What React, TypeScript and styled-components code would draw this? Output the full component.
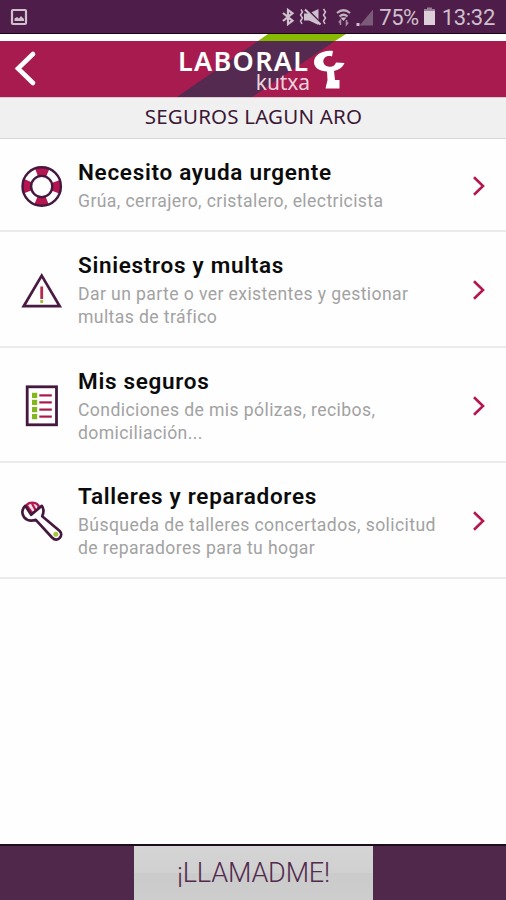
import React from "react";
import styled, { createGlobalStyle } from "styled-components";

const plum = "#50284c";
const crimson = "#a81b4f";

const GlobalStyle = createGlobalStyle`
  * { box-sizing: border-box; }
  body { margin: 0; background: #fff; }
`;

const Screen = styled.div`
  width: 506px;
  height: 900px;
  display: flex;
  flex-direction: column;
  background: #fefefe;
  font-family: Roboto, "Liberation Sans", sans-serif;
  overflow: hidden;
`;

const StatusBar = styled.div`
  height: 34px;
  flex: none;
  display: flex;
  align-items: center;
  padding: 0 11px 0 10px;
  background: #4e1d49;
  border-bottom: 1px solid #1b0618;
  color: #cfc0cd;
`;

const StatusRight = styled.div`
  margin-left: auto;
  display: flex;
  align-items: center;
`;

const StatusText = styled.span<{ $spacing: number }>`
  font-size: 22px;
  line-height: 33px;
  letter-spacing: ${(p) => p.$spacing}px;
  padding-top: 2px;
`;

const Header = styled.header`
  position: relative;
  height: 63px;
  flex: none;
  padding-top: 7px;
  background: linear-gradient(#fff 7px, ${crimson} 7px);
`;

const Ribbon = styled.svg`
  position: absolute;
  left: 0;
  top: 0;
`;

const HeaderContent = styled.div`
  position: relative;
  height: 56px;
  display: flex;
  align-items: flex-start;
`;

const BackButton = styled.button`
  border: 0;
  background: none;
  padding: 0 0 0 12px;
  width: 178px;
  height: 54px;
  display: flex;
  align-items: center;
`;

const Wordmark = styled.div`
  width: 132px;
  display: flex;
  flex-direction: column;
  align-items: flex-end;
  padding-top: 8px;
  color: #fff;
  font-family: "Noto Sans", "Open Sans", sans-serif;
`;

const BrandMain = styled.span`
  width: 132px;
  font-size: 27px;
  font-weight: 600;
  line-height: 23px;
  letter-spacing: 1.3px;
  white-space: nowrap;
`;

const BrandSub = styled.span`
  font-size: 21px;
  line-height: 20px;
  color: #ead3df;
  letter-spacing: -0.1px;
`;

const BrandIcon = styled.svg`
  margin: 8px 0 0 3px;
`;

const SectionTitle = styled.h1`
  margin: 0;
  height: 42px;
  flex: none;
  background: #f0f0f0;
  border-top: 1px solid #d9c9d1;
  border-bottom: 1px solid #d8d8d8;
  text-align: center;
  font-family: "Noto Sans", "Open Sans", sans-serif;
  font-weight: 400;
  font-size: 20.5px;
  line-height: 37px;
  letter-spacing: 0.2px;
  color: #3b1836;
  padding-left: 1px;
`;

const List = styled.ul`
  list-style: none;
  margin: 0;
  padding: 0;
  flex: 1;
`;

const Row = styled.li<{ $height: number }>`
  height: ${(p) => p.$height}px;
  display: flex;
  border-bottom: 2px solid #ebebeb;
`;

const IconCell = styled.div`
  width: 78px;
  padding-left: 20px;
  display: flex;
  align-items: center;
  padding-top: 4px;
`;

const TextCell = styled.div`
  flex: 1;
  padding-top: 19px;
  white-space: nowrap;
`;

const RowTitle = styled.div`
  font-size: 22.5px;
  font-weight: 600;
  line-height: 28px;
  letter-spacing: 0.7px;
  color: #0b0b0b;
  margin-bottom: 4px;
`;

const RowLine = styled.div`
  font-size: 17.6px;
  line-height: 22.5px;
  letter-spacing: 0.4px;
  color: #a2a2a2;
`;

const ChevronCell = styled.div`
  width: 34px;
  display: flex;
  align-items: center;
  padding-top: 2px;
`;

const Footer = styled.footer`
  height: 56px;
  flex: none;
  display: flex;
  justify-content: center;
  background: ${plum};
  border-top: 2px solid #1d0e1c;
`;

const CallButton = styled.button`
  width: 239px;
  margin-left: 1px;
  height: 54px;
  border: 0;
  padding: 0;
  background: linear-gradient(#d5d5d5 0%, #d0d0d0 50%, #cbcbcb 51%, #cdcdcd 100%);
  color: #512a4d;
  font-family: Roboto, sans-serif;
  font-weight: 300;
  font-size: 27px;
  letter-spacing: -0.15px;
`;

const Lifebuoy = () => (
  <svg width="44" height="44" viewBox="0 0 44 44">
    <circle cx="21.7" cy="21.5" r="15" fill="none" stroke="#fff" strokeWidth="9" />
    <circle cx="21.7" cy="21.5" r="15" fill="none" stroke="#b5164f" strokeWidth="9" strokeDasharray="11.4 12.16" strokeDashoffset="5.7" />
    <circle cx="21.7" cy="21.5" r="19.2" fill="none" stroke="#45183f" strokeWidth="2.4" />
    <circle cx="21.7" cy="21.5" r="10.6" fill="none" stroke="#45183f" strokeWidth="2.4" />
  </svg>
);

const Warning = () => (
  <svg width="44" height="44" viewBox="0 0 44 44">
    <path d="M21.7 6.6 L39.7 37.2 H3.7 Z" fill="none" stroke="#491a43" strokeWidth="2.7" />
    <path d="M21.7 17.5 V30" stroke="#b5294b" strokeWidth="2.8" />
    <path d="M21.7 31 V34" stroke="#9bbb32" strokeWidth="2.8" />
  </svg>
);

const Policy = () => (
  <svg width="44" height="44" viewBox="0 0 44 44">
    <rect x="7.2" y="1.8" width="29.3" height="38" fill="none" stroke="#45183f" strokeWidth="2.8" />
    {[7.8, 14.8, 22, 29].map((y) => (
      <g key={y}>
        <rect x="12" y={y} width="5.2" height="5.2" fill="#82b81c" />
        <path d={`M19.3 ${y + 2.6} H31.8`} stroke="#ad184b" strokeWidth="2.2" />
      </g>
    ))}
  </svg>
);

const Wrench = () => (
  <svg width="44" height="44" viewBox="0 0 44 44" strokeLinejoin="round">
    <path d="M6.5 5.2 C9 2 15 1.5 18.5 5.5 V9 L12.5 13.5 Z" fill="#f6dfe7" stroke="#b5164f" strokeWidth="2.4" />
    <path d="M12 3.5 L15.5 10" stroke="#b5164f" strokeWidth="2.2" />
    <path
      d="M5.3 5.8 C1.8 9 1.4 14 4.2 17.3 C7 20.5 11.5 21.2 15.8 19.8 L32 37.5 C34.5 40 37.5 40 39.6 38 C41.8 35.8 41.6 33 39.7 31 L22.2 16.2 C24 12.3 23.7 8.5 21.8 5.8 L11.2 14.8 Z"
      fill="#fff"
      stroke="#45183f"
      strokeWidth="2.7"
    />
    <circle cx="35.8" cy="34.2" r="2.5" fill="#a0c840" />
  </svg>
);

const Chevron = () => (
  <svg width="14" height="22" viewBox="0 0 14 22">
    <path d="M2 2.2 L11 11 L2 19.8" fill="none" stroke="#b3174f" strokeWidth="2.6" />
  </svg>
);

const StatusIcons = () => (
  <svg width="98" height="24" viewBox="0 0 98 24">
    <path d="M2 8 L11.5 15.8 L7 19 V5 L11.5 8.2 L2 16" fill="none" stroke="#cfc0cd" strokeWidth="2.2" />
    <path d="M23 8.5 H28 L37.5 4 V20 L28 15.5 H23 Z" fill="#cfc0cd" />
    <path d="M26 4 L40 18.5" stroke="#4e1d49" strokeWidth="2" />
    <path d="M24 4.5 L39.5 19.5" stroke="#cfc0cd" strokeWidth="2.2" />
    <path d="M20 4.5 L21.5 7 L19.5 10 L21.5 13 L19.5 16 L21 19 M42.5 4 L44.5 7 L42.5 10 L44.5 13 L42.5 16 L44 19" fill="none" stroke="#cfc0cd" strokeWidth="1.5" />
    <path d="M56 8 Q62.5 2.5 69 8 M58.5 11.5 Q62.5 8 66.5 11.5" fill="none" stroke="#c3b0c1" strokeWidth="2.2" />
    <path d="M59.5 12.5 H65.5 L62.5 16 Z" fill="#cfc0cd" />
    <path d="M59.5 20 V15.5 L57.8 17.5 M65.5 15 V19.5 L67.2 17.5" fill="none" stroke="#a78ea5" strokeWidth="1.6" />
    <path d="M92 4.5 V20.5 H78.5 Z" fill="#7c5a79" />
    <rect x="75.5" y="18" width="3" height="3" fill="#cfc0cd" />
  </svg>
);

const items: { icon: React.ReactNode; title: string; height: number; lines: string[] }[] = [
  { icon: <Lifebuoy />, title: "Necesito ayuda urgente", height: 93, lines: ["Grúa, cerrajero, cristalero, electricista"] },
  { icon: <Warning />, title: "Siniestros y multas", height: 116, lines: ["Dar un parte o ver existentes y gestionar", "multas de tráfico"] },
  { icon: <Policy />, title: "Mis seguros", height: 115, lines: ["Condiciones de mis pólizas, recibos,", "domiciliación..."] },
  { icon: <Wrench />, title: "Talleres y reparadores", height: 116, lines: ["Búsqueda de talleres concertados, solicitud", "de reparadores para tu hogar"] },
];

export default function App() {
  return (
    <Screen>
      <GlobalStyle />
      <StatusBar>
        <svg width="18" height="18" viewBox="0 0 18 18">
          <rect x="2" y="2" width="14" height="14" rx="1" fill="none" stroke="#cfc0cd" strokeWidth="2.2" />
          <path d="M4.5 13 V10.5 L7 9 L9 10.5 L11 8 L14 11 V13 Z" fill="#cfc0cd" />
        </svg>
        <StatusRight>
          <StatusIcons />
          <StatusText $spacing={-0.5}>75%</StatusText>
          <svg width="23" height="22" viewBox="0 0 23 22">
            <path d="M5 5 V3 H8 V1.5 H13 V3 H16 V5 Z" fill="#9a7d97" />
            <rect x="5" y="5" width="11" height="14" fill="#dccfda" />
          </svg>
          <StatusText $spacing={-0.3}>13:32</StatusText>
        </StatusRight>
      </StatusBar>
      <Header>
        <Ribbon width="506" height="63" viewBox="0 0 506 63">
          <path d="M268 0 H346 L335 7 H258 Z" fill="#86b900" />
          <path d="M258 7 H335 L252 63 H177 Z" fill="#552a50" />
        </Ribbon>
        <HeaderContent>
          <BackButton aria-label="Atrás">
            <svg width="28" height="40" viewBox="0 0 28 40">
              <path d="M21 6 L6 20.5 L21 35" fill="none" stroke="#fff" strokeWidth="4.6" strokeLinecap="round" />
            </svg>
          </BackButton>
          <Wordmark>
            <BrandMain>LABORAL</BrandMain>
            <BrandSub>kutxa</BrandSub>
          </Wordmark>
          <BrandIcon width="34" height="42" viewBox="0 0 34 42">
            <path
              d="M20 2 C10 0.5 1 6 1 13 C1 19 7 22.5 14 22.5 L14.5 31 L12.5 39.5 H26.5 V31 H22 L21 22 C26.5 20.5 30 18 31.5 14 L23 13.5 C22 17 18.5 18.5 15 17.5 C10.5 16.5 9 12 11.5 9 C13.5 6.8 16 6.8 19 7.5 Z"
              fill="#fff"
            />
          </BrandIcon>
        </HeaderContent>
      </Header>
      <SectionTitle>SEGUROS LAGUN ARO</SectionTitle>
      <List>
        {items.map((item) => (
          <Row key={item.title} $height={item.height}>
            <IconCell>{item.icon}</IconCell>
            <TextCell>
              <RowTitle>{item.title}</RowTitle>
              {item.lines.map((text) => (
                <RowLine key={text}>{text}</RowLine>
              ))}
            </TextCell>
            <ChevronCell>
              <Chevron />
            </ChevronCell>
          </Row>
        ))}
      </List>
      <Footer>
        <CallButton>¡LLAMADME!</CallButton>
      </Footer>
    </Screen>
  );
}
